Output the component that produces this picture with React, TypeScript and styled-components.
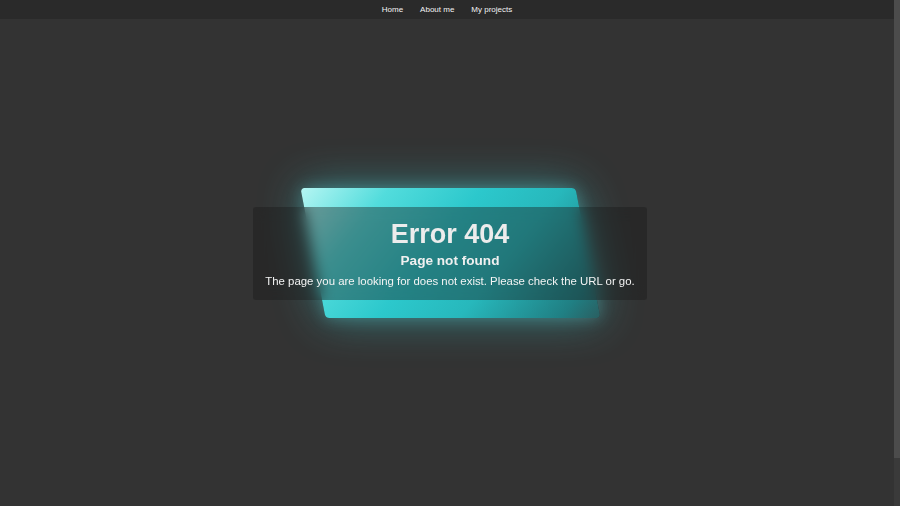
import React from "react";
import styled, { createGlobalStyle } from "styled-components";

const GlobalStyle = createGlobalStyle`
  html, body {
    margin: 0;
    padding: 0;
    background: #333333;
    font-family: "Liberation Sans", Arial, sans-serif;
    color: #eeeeee;
    overflow: hidden;
  }
`;

const Frame = styled.div`
  display: flex;
  height: 100vh;
`;

const Page = styled.div`
  flex: 1;
  min-width: 0;
`;

const ScrollTrack = styled.div`
  width: 6px;
  background: #3a3a3a;
  display: flex;
  flex-direction: column;
`;

const ScrollThumb = styled.div`
  height: 458px;
  background: #4c4c4c;
`;

const Nav = styled.nav`
  height: 19px;
  background: #2a2a2a;
  display: flex;
  justify-content: center;
  align-items: center;
  gap: 17px;
`;

const NavLink = styled.a`
  color: #f4f4f4;
  font-size: 8px;
  font-weight: 500;
  text-decoration: none;
  cursor: pointer;
`;

const Main = styled.main`
  height: 487px;
  padding-bottom: 19px;
  box-sizing: border-box;
  display: flex;
  align-items: center;
  justify-content: center;
`;

const Stage = styled.div`
  display: grid;
  place-items: center;
  margin-left: 6px;
`;

const Shape = styled.div`
  grid-area: 1 / 1;
  width: 275px;
  height: 130px;
  border-radius: 4px;
  transform: skewX(10.9deg);
  background: linear-gradient(
    135deg,
    #b6f6f3 0%,
    #52dcdc 22%,
    #2cc8cc 45%,
    #27b8bc 65%,
    #207f83 90%,
    #2a5e60 100%
  );
  box-shadow: 0 0 44px rgba(60, 215, 220, 0.45), 0 0 16px rgba(110, 230, 232, 0.3);
`;

const Glass = styled.div`
  grid-area: 1 / 1;
  width: 394px;
  box-sizing: border-box;
  padding: 11px;
  border-radius: 3px;
  background: rgba(24, 24, 24, 0.4);
  backdrop-filter: blur(7px);
  -webkit-backdrop-filter: blur(7px);
  text-align: center;
  display: flex;
  flex-direction: column;
  align-items: center;
`;

const Title = styled.h1`
  margin: 0;
  font-size: 27px;
  line-height: 32px;
  font-weight: 700;
  color: #ececec;
`;

const Subtitle = styled.h2`
  margin: 2px 0 0;
  font-size: 13.6px;
  line-height: 18px;
  font-weight: 700;
  color: #f0f0f0;
`;

const Message = styled.p`
  margin: 3px 0 0;
  font-size: 11.4px;
  line-height: 16px;
  color: #f4f4f4;
  white-space: nowrap;
`;

export default function App() {
  return (
    <>
      <GlobalStyle />
      <Frame>
        <Page>
          <Nav>
            <NavLink>Home</NavLink>
            <NavLink>About me</NavLink>
            <NavLink>My projects</NavLink>
          </Nav>
          <Main>
            <Stage>
              <Shape />
              <Glass>
                <Title>Error 404</Title>
                <Subtitle>Page not found</Subtitle>
                <Message>
                  The page you are looking for does not exist. Please check the URL or go.
                </Message>
              </Glass>
            </Stage>
          </Main>
        </Page>
        <ScrollTrack>
          <ScrollThumb />
        </ScrollTrack>
      </Frame>
    </>
  );
}
